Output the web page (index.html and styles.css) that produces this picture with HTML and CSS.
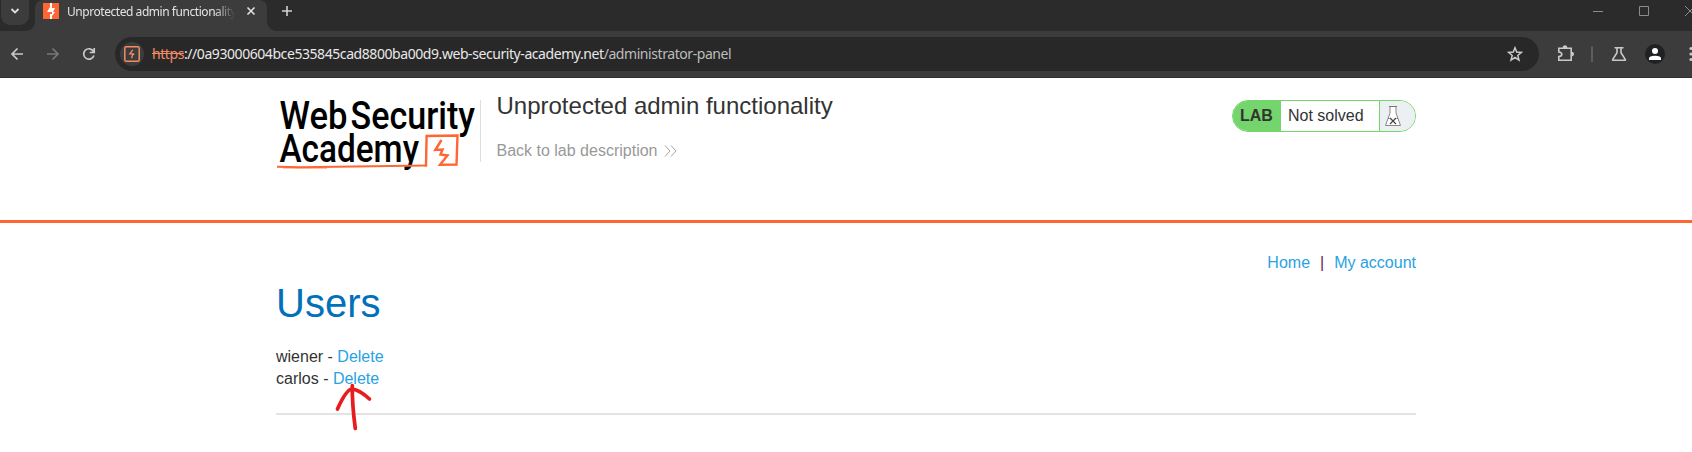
FILE: index.html
```html
<!DOCTYPE html>
<html lang="en">
<head>
<meta charset="utf-8">
<title>Unprotected admin functionality</title>
<link rel="stylesheet" href="styles.css">
</head>
<body>
<div class="tabstrip">
  <div class="tabsearch"><svg width="10" height="8" viewBox="0 0 10 8"><path d="M1.500 2 5 5.500 8.500 2" fill="none" stroke="#dedede" stroke-width="1.800"/></svg></div>
  <div class="tab">
    <svg class="favicon" width="16" height="16" viewBox="0 0 16 16"><path fill="#ff6633" d="M0 0h16v16H0z"/><path fill="#fff" d="M7 0h2v5h3l-2 4h2l-3 4v3H7v-5h2V9H4l3-5z"/></svg>
    <span class="tabtitle">Unprotected admin functionality</span>
    <svg class="tabclose" width="10" height="10" viewBox="0 0 10 10"><path d="m1.500 1.500 7 7m0-7-7 7" stroke="#e0e0e0" stroke-width="1.600"/></svg>
  </div>
  <svg class="newtab" width="12" height="12" viewBox="0 0 12 12"><path d="M6 1v10M1 6h10" stroke="#d0d0d0" stroke-width="1.600"/></svg>
  <svg class="winctl" width="212" height="31" viewBox="0 0 212 31"><g fill="none" stroke="#8c8c8c"><path d="M113 11.500h10M159.500 6.500h9v9h-9zM205 6l10 10m0-10-10 10"/></g></svg>
</div>
<div class="toolbar">
  <svg class="nav" width="100" height="46" viewBox="0 0 100 46"><g fill="none" stroke="#c9c9c9" stroke-width="1.700"><path d="M23 23H12m5.500-5.500L12 23l5.500 5.500"/><path stroke="#777" d="M47 23h11m-5.500-5.500L58 23l-5.500 5.500"/><path d="M93.500 20.500a5.200 5.200 0 1 0 .4 4M94.200 17v4.500h-4.500"/></g></svg>
  <div class="omnibox">
    <div class="site"><svg width="16" height="16" viewBox="0 0 16 16"><rect x=".8" y=".8" width="14.400" height="14.400" rx="1.500" fill="none" stroke="#f58b60" stroke-width="1.500"/><path d="M8.800 3.800 5.800 7.800h3.200L7.500 12.300M9 7.800l1.300.8" fill="none" stroke="#f58b60" stroke-width="1.300"/></svg></div>
    <div class="url"><span class="scheme">https</span><span class="host">://0a93000604bce535845cad8800ba00d9.web-security-academy.net</span><span class="path">/administrator-panel</span></div>
    <svg class="star" width="16" height="16" viewBox="0 0 16 16"><path d="m8 1.800 1.700 4.300 4.700.3-3.600 3 1.200 4.700L8 11.500l-4 2.600 1.200-4.700-3.600-3 4.700-.3z" fill="none" stroke="#c9c9c9" stroke-width="1.500"/></svg>
  </div>
  <svg class="actions" width="153" height="46" viewBox="1539 31 153 46">
    <g fill="none" stroke="#c9c9c9" stroke-width="1.600"><path d="M1558.800 48.300h12.400v12H1558.800v-3.700q3-.3 3-2.300t-3-2.300z"/><path d="M1614.500 47.700h9M1617 48v4.800l-4.200 6.500q-.6 1 .6 1h11.200q1.200 0 .6-1l-4.200-6.500V48"/></g>
    <path fill="#c9c9c9" d="M1562.700 48q0-2.700 2.300-2.700t2.300 2.700zM1571 51.700q3 0 3 2.300t-3 2.300z"/>
    <path fill="#5d5d5d" d="M1591 46.500h2V62h-2z"/>
    <circle cx="1655" cy="54" r="10" fill="#202124"/><circle cx="1655" cy="51" r="3" fill="#fff"/><path fill="#fff" d="M1649 60v-1.600q0-2.700 6-2.700t6 2.700V60z"/>
    <g fill="#c9c9c9"><circle cx="1691" cy="48.500" r="1.600"/><circle cx="1691" cy="54" r="1.600"/><circle cx="1691" cy="59.500" r="1.600"/></g>
  </svg>
</div>
<header class="labheader">
  <div class="container headrow">
    <svg class="logo" width="204" height="80" viewBox="276 92 204 80">
      <g class="logotext"><text x="279.500" y="128.700" textLength="68" lengthAdjust="spacingAndGlyphs">Web</text><text x="350.500" y="128.700" textLength="124.500" lengthAdjust="spacingAndGlyphs">Security</text><text x="279.500" y="161.500" textLength="139.500" lengthAdjust="spacingAndGlyphs">Academy</text></g>
      <g fill="none" stroke="#ff6633"><path stroke-width="2" d="M277 166.700 300 167.200 427 165.600"/><path stroke-width="1" stroke-opacity=".5" d="M283 168.200 327 168.400"/><path stroke-width="2.400" d="M426 166.500 426.600 136 457.500 135.500 456.500 164.500 440 164.800 447.500 155.500 440.500 154.500 442.500 149.500 435.300 150 441.500 140"/></g>
    </svg>
    <div class="titles">
      <h2>Unprotected admin functionality</h2>
      <a class="back">Back to lab description <svg width="13" height="14" viewBox="0 0 13 14"><path d="M1 1.500 6 7l-5 5.500M7 1.500 12 7l-5 5.500" fill="none" stroke="#a5a5a5"/></svg></a>
    </div>
    <div class="badge">
      <span class="lab">LAB</span><span class="status">Not solved</span>
      <span class="flask"><svg width="18" height="22" viewBox="0 0 18 22"><path d="M6 2v6L1.500 20.500h15L12 8V2" fill="#fff" stroke="#888"/><path d="M5 1.500h8M4 13.500h1.500M12.500 13.500H14" stroke="#777"/><path d="m6 13 6 6m0-6-6 6" stroke="#444" stroke-width="1.200"/></svg></span>
    </div>
  </div>
</header>
<main class="container">
  <nav class="links"><a>Home</a><span class="bar">|</span><a>My account</a></nav>
  <h1>Users</h1>
  <div class="user">wiener - <a>Delete</a></div>
  <div class="user">carlos - <a>Delete</a></div>
  <hr>
</main>
<svg class="arrow" width="44" height="56" viewBox="332 378 44 56"><path d="M352.300 385.500Q352 404 355.300 428.500M337.500 409Q346 390 352 388.800Q360 390 369.500 399" fill="none" stroke="#e81b1e" stroke-width="3.700" stroke-linecap="round" stroke-linejoin="round"/></svg>
</body>
</html>
```
FILE: styles.css
```css
* { box-sizing: border-box; }
body { margin: 0; height: 452px; overflow: hidden; background: #fff; color: #333332; font: 16px/22px "Liberation Sans", Arial, sans-serif; }
svg { display: block; flex: none; }
.tabstrip { display: flex; height: 31px; background: #2b2b2b; }
.tabsearch { width: 28px; height: 25px; margin: 0 6px 0 1px; background: #3c3c3c; border-radius: 0 0 9px 9px; display: flex; align-items: center; justify-content: center; padding-bottom: 3px; }
.tab { position: relative; width: 232px; height: 31px; background: #3c3c3c; border-radius: 8px 8px 0 0; display: flex; padding-left: 8px; }
.tab::before, .tab::after { content: ""; position: absolute; bottom: 0; width: 9px; height: 9px; }
.tab::before { left: -9px; background: radial-gradient(circle at 0 0, #2b2b2b 8.500px, #3c3c3c 9px); }
.tab::after { right: -9px; background: radial-gradient(circle at 100% 0, #2b2b2b 8.500px, #3c3c3c 9px); }
.favicon { margin-top: 3px; }
.tabtitle { width: 168px; margin-left: 8px; overflow: hidden; white-space: nowrap; font: 12px/24px "Noto Sans", sans-serif; letter-spacing: -.45px; color: #e3e3e3; -webkit-mask-image: linear-gradient(90deg, #000 148px, transparent 168px); mask-image: linear-gradient(90deg, #000 148px, transparent 168px); }
.tabclose { margin: 6px 0 0 11px; }
.newtab { margin: 5px 0 0 14px; }
.winctl { margin-left: auto; }
.toolbar { display: flex; height: 47px; background: #3c3c3c; border-bottom: 1px solid #2f2f2f; }
.omnibox { display: flex; align-items: center; height: 34px; width: 1424px; margin: 6px 0 0 15px; border-radius: 17px; background: #282828; padding: 0 16px 0 5px; }
.site { display: flex; align-items: center; justify-content: center; width: 24px; height: 24px; border-radius: 50%; background: #3c3c3c; }
.url { margin-left: 8px; white-space: nowrap; font: 14px/20px "Noto Sans", sans-serif; letter-spacing: -.43px; color: #e8e8e8; }
.scheme { color: #f28b66; text-decoration: line-through; }
.path { color: #bdbdbd; }
.star { margin-left: auto; }
.container { width: 1140px; margin: 0 auto; }
.labheader { height: 145px; border-bottom: 3px solid #ff6633; }
.headrow { display: flex; padding-top: 14px; }
.logotext { font: 500 38.500px Roboto, sans-serif; fill: #000; }
.titles { margin: 8px 0 0; height: 62px; padding-left: 15.5px; border-left: 1px solid #dedede; }
h2 { margin: -8px 0 20px; font-size: 24px; line-height: 28px; font-weight: 400; }
.back { display: flex; align-items: center; gap: 7px; color: #999; line-height: 22px; }
.badge { display: flex; width: 184px; height: 32px; margin: 8px 0 0 auto; border: 1px solid #73d56b; border-radius: 16px; overflow: hidden; line-height: 30px; background: #fff; }
.lab { width: 48px; padding-left: 7px; font-weight: 700; background: #73d56b; }
.status { width: 98px; padding-left: 7px; }
.flask { flex: 1; border-left: 1px solid #73d56b; background: #ecf0f3; padding: 4px 0 0 4px; }
.links { display: flex; justify-content: flex-end; padding-top: 29px; }
a { color: #29a2e2; }
.back { color: #999; }
.bar { color: #6b1f4f; margin: 0 10px; }
h1 { margin: 6px 0 20px; font-size: 40px; line-height: 46px; font-weight: 400; color: #0071ba; }
hr { height: 2px; margin: 23px 0 0; border: 0; background: #e4e4e4; }
.arrow { position: absolute; left: 332px; top: 378px; }
```
